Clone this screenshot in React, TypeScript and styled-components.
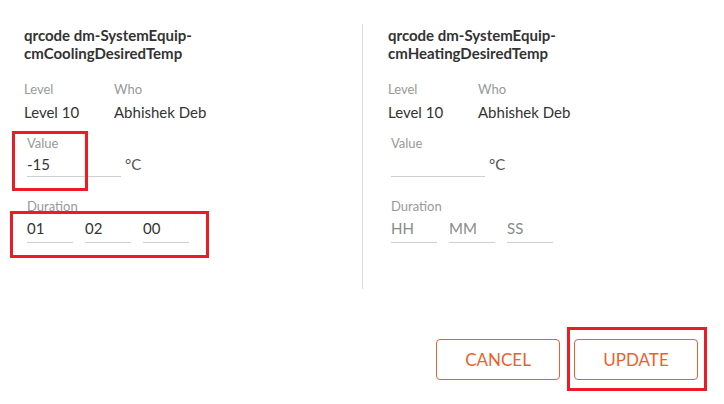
import styled, { createGlobalStyle } from 'styled-components';

const GlobalStyle = createGlobalStyle`
  body {
    margin: 0;
    background: #fff;
    font-family: Lato, "Open Sans", Arial, sans-serif;
  }
`;

type Panel = {
  point: string;
  level: string;
  who: string;
  value: string;
  duration: string[];
  marked?: boolean;
};

const panels: Panel[] = [
  {
    point: 'qrcode dm-SystemEquip-cmCoolingDesiredTemp',
    level: 'Level 10',
    who: 'Abhishek Deb',
    value: '-15',
    duration: ['01', '02', '00'],
    marked: true,
  },
  {
    point: 'qrcode dm-SystemEquip-cmHeatingDesiredTemp',
    level: 'Level 10',
    who: 'Abhishek Deb',
    value: '',
    duration: ['', '', ''],
  },
];

const placeholders = ['HH', 'MM', 'SS'];

function PanelView({ panel }: { panel: Panel }) {
  const [first, second] = panel.point.split('-cm');
  return (
    <Column>
      <Title>
        {first}-<br />cm{second}
      </Title>
      <Meta>
        <div>
          <Label>Level</Label>
          <MetaValue>{panel.level}</MetaValue>
        </div>
        <div>
          <Label>Who</Label>
          <MetaValue>{panel.who}</MetaValue>
        </div>
      </Meta>
      <Field>
        {panel.marked && <Highlight $left={-15} $top={-4} $width={76} $height={60} />}
        <Label>Value</Label>
        <ValueRow>
          <Input $width={94} defaultValue={panel.value} />
          <Unit>°C</Unit>
        </ValueRow>
      </Field>
      <Field $gap={21}>
        {panel.marked && <Highlight $left={-17} $top={13} $width={199} $height={47} />}
        <Label>Duration</Label>
        <DurationRow>
          {panel.duration.map((d, i) => (
            <Input key={i} $width={46} $height={29} defaultValue={d} placeholder={placeholders[i]} />
          ))}
        </DurationRow>
      </Field>
    </Column>
  );
}

export default function App() {
  return (
    <>
      <GlobalStyle />
      <Page>
        <Columns>
          {panels.map((p) => (
            <PanelView key={p.point} panel={p} />
          ))}
        </Columns>
        <Actions>
          <Button>Cancel</Button>
          <Marked>
            <Highlight $left={-7} $top={-12} $width={140} $height={64} />
            <Button>Update</Button>
          </Marked>
        </Actions>
      </Page>
    </>
  );
}

const Page = styled.div`
  width: 724px;
  height: 404px;
  box-sizing: border-box;
  padding-top: 24px;
`;

const Columns = styled.div`
  display: grid;
  grid-template-columns: 362px 1fr;
  height: 265px;
`;

const Column = styled.div`
  padding: 2px 0 0 24px;
  & + & {
    border-left: 1px solid #dcdcdc;
    padding-left: 25px;
  }
`;

const Title = styled.h3`
  margin: 0;
  font-size: 15px;
  line-height: 18px;
  font-weight: 700;
  color: #333;
`;

const Meta = styled.div`
  display: grid;
  grid-template-columns: 90px auto;
  justify-content: start;
  margin-top: 19px;
`;

const Label = styled.div`
  font-size: 13px;
  line-height: 16px;
  color: #999;
`;

const MetaValue = styled.div`
  margin-top: 6px;
  font-size: 15px;
  line-height: 18px;
  color: #333;
`;

const Field = styled.div<{ $gap?: number }>`
  position: relative;
  margin: ${(p) => p.$gap ?? 14}px 0 0 3px;
`;

const ValueRow = styled.div`
  display: flex;
  align-items: center;
  gap: 4px;
`;

const DurationRow = styled.div`
  display: flex;
  gap: 12px;
`;

const Input = styled.input<{ $width: number; $height?: number }>`
  width: ${(p) => p.$width}px;
  height: ${(p) => p.$height ?? 26}px;
  box-sizing: border-box;
  padding: 0;
  border: none;
  border-bottom: 1px solid #cfcfcf;
  outline: none;
  font-family: inherit;
  font-size: 15px;
  color: #333;
  background: transparent;
  &::placeholder {
    color: #8a8a8a;
  }
`;

const Unit = styled.span`
  font-size: 15px;
  color: #555;
`;

const Highlight = styled.div<{ $left: number; $top: number; $width: number; $height: number }>`
  position: absolute;
  left: ${(p) => p.$left}px;
  top: ${(p) => p.$top}px;
  width: ${(p) => p.$width}px;
  height: ${(p) => p.$height}px;
  box-sizing: border-box;
  border: 3px solid #ed1c24;
  pointer-events: none;
`;

const Actions = styled.div`
  display: flex;
  justify-content: flex-end;
  gap: 14px;
  margin-top: 50px;
  padding-right: 26px;
`;

const Marked = styled.span`
  position: relative;
  display: inline-flex;
`;

const Button = styled.button`
  width: 124px;
  height: 41px;
  border: 1px solid #e8622c;
  border-radius: 4px;
  background: #fff;
  color: #e8622c;
  font-family: inherit;
  font-size: 17px;
  text-transform: uppercase;
  cursor: pointer;
`;
